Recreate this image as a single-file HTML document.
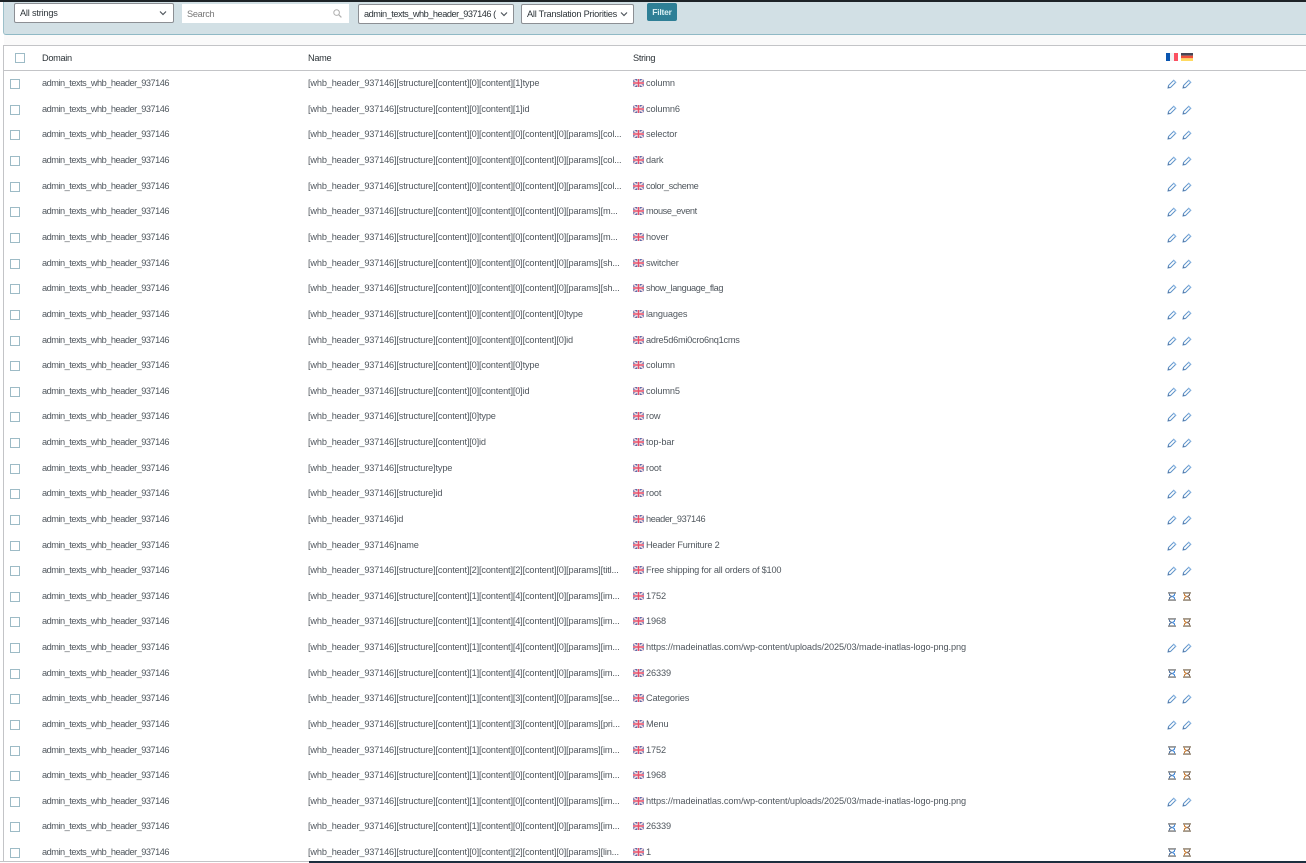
<!DOCTYPE html>
<html><head><meta charset="utf-8"><style>
html,body{margin:0;padding:0;background:#fff}
body{width:1306px;height:863px;position:relative;overflow:hidden;font-family:"Liberation Sans",sans-serif;font-size:9.2px;color:#50575e}
.a{position:absolute;white-space:nowrap}
#top{left:0;top:0;width:1306px;height:2px;background:#1d2327}
#panel{left:3px;top:2px;width:1303px;height:32px;background:#d2e0e5;border-left:1px solid #9dc0ca;border-bottom:1px solid #8fb9c5;border-bottom-left-radius:3px}
#gap{left:4px;top:35px;width:1302px;height:10px;background:#fafafa}
.sel{box-sizing:border-box;background:#fff;border:1px solid #8c8f94;border-radius:2px;color:#2c3338;line-height:18px;padding-left:5px;height:20px}
.chev{position:absolute;right:4px;top:6px}
#tbl{left:3px;top:45px;width:1303px;height:816px;border-left:1px solid #c3c4c7;border-top:1px solid #c3c4c7;box-sizing:border-box}
#hl{left:4px;top:70px;width:1302px;height:1px;background:#c3c4c7}
#bl{left:0;top:861px;width:309px;height:1px;background:#c3c4c7}
#bd{left:309px;top:861px;width:997px;height:2px;background:#1d2f3f}
.cb{position:absolute;box-sizing:border-box;width:10px;height:10px;border:1px solid #9dbbc6;background:#fff}
.t{position:absolute;white-space:nowrap;line-height:12px}
.d{left:42px;letter-spacing:-.48px}
.n{left:308px;letter-spacing:-.16px}
.s{left:646px;letter-spacing:-.12px}
.u{letter-spacing:-.4px}
.h{color:#2c3338;letter-spacing:-.3px}
svg{position:absolute;display:block}
</style></head><body>
<svg width="0" height="0" style="position:absolute"><defs>
<symbol id="uk" viewBox="0 0 11 8"><rect width="11" height="8" fill="#5a6aa8"/><path d="M0 0L11 8M11 0L0 8" stroke="#f0d8de" stroke-width="1.6"/><path d="M5.5 0V8M0 4H11" stroke="#f2e4e8" stroke-width="2.6"/><path d="M5.5 0V8M0 4H11" stroke="#e8506a" stroke-width="1.4"/></symbol>
<symbol id="pen" viewBox="0 0 10 10"><path d="M1 9L1.5 6.5L6.8 1.2L8.8 3.2L3.5 8.5Z" fill="#fff" stroke="#5f93c9" stroke-width="1"/><path d="M6.6 1.4L8.6 3.4" stroke="#9cc4ec" stroke-width="1.3"/><path d="M1 9L1.6 7.2L2.8 8.4Z" fill="#55688a"/></symbol>
<symbol id="hg" viewBox="0 0 8 9"><rect width="8" height="1.8" fill="#9a9a9a"/><rect y="7.2" width="8" height="1.8" fill="#9a9a9a"/><path d="M1.5 1.6V3C1.5 4 3.5 3.8 3.5 4.5C3.5 5.2 1.5 5 1.5 6V7.4" fill="none" stroke="#4f6f9a" stroke-width="1.1"/><path d="M6.5 1.6V3C6.5 4 4.5 3.8 4.5 4.5C4.5 5.2 6.5 5 6.5 6V7.4" fill="none" stroke="#3f86d8" stroke-width="1.1"/></symbol>
<symbol id="hg2" viewBox="0 0 8 9"><rect width="8" height="1.8" fill="#a59a8c"/><rect y="7.2" width="8" height="1.8" fill="#a59a8c"/><path d="M1.5 1.6V3C1.5 4 3.5 3.8 3.5 4.5C3.5 5.2 1.5 5 1.5 6V7.4" fill="none" stroke="#c87a30" stroke-width="1.1"/><path d="M6.5 1.6V3C6.5 4 4.5 3.8 4.5 4.5C4.5 5.2 6.5 5 6.5 6V7.4" fill="none" stroke="#7a6050" stroke-width="1.1"/></symbol>
</defs></svg>
<div class="a" id="top"></div>
<div class="a" id="panel"></div>
<div class="a" id="gap"></div>
<div class="a sel" style="left:14px;top:3px;width:160px;letter-spacing:-.2px">All strings<svg class="chev" style="right:6px" width="8" height="6" viewBox="0 0 8 6"><path d="M1 1.5L4 4.5L7 1.5" fill="none" stroke="#50575e" stroke-width="1.2"/></svg></div>
<div class="a" style="left:182px;top:4px;width:167px;height:19px;background:#fff;line-height:20px;color:#777;padding-left:5px;box-sizing:border-box;letter-spacing:-.3px">Search<svg style="right:7px;top:5px" width="9" height="9" viewBox="0 0 9 9"><circle cx="3.6" cy="3.6" r="2.8" fill="none" stroke="#b0b0b0"/><path d="M5.7 5.7L8.4 8.4" stroke="#b0b0b0" stroke-width="1.2"/></svg></div>
<div class="a sel" style="left:358px;top:4px;width:156px;overflow:hidden;letter-spacing:-.48px">admin_texts_whb_header_937146 (<span style="position:absolute;right:0;top:0;width:16px;height:18px;background:#fff"></span><svg class="chev" style="right:5px" width="8" height="6" viewBox="0 0 8 6"><path d="M1 1.5L4 4.5L7 1.5" fill="none" stroke="#50575e" stroke-width="1.2"/></svg></div>
<div class="a sel" style="left:521px;top:4px;width:113px;letter-spacing:-.23px">All Translation Priorities<svg class="chev" style="right:5px" width="8" height="6" viewBox="0 0 8 6"><path d="M1 1.5L4 4.5L7 1.5" fill="none" stroke="#50575e" stroke-width="1.2"/></svg></div>
<div class="a" style="left:647px;top:3px;width:30px;height:18px;background:#2e7f96;border-radius:2px;color:#d8eef2;text-align:center;line-height:18px;font-size:8.5px;font-weight:bold;letter-spacing:-.2px">Filter</div>
<div class="a" id="tbl"></div><div class="a" id="hl"></div><div class="a" id="bl"></div><div class="a" id="bd"></div>
<div class="cb" style="left:15px;top:53px"></div>
<div class="t h" style="left:42px;top:52px">Domain</div><div class="t h" style="left:308px;top:52px">Name</div><div class="t h" style="left:633px;top:52px">String</div>
<svg style="left:1166px;top:53px" width="12" height="8" viewBox="0 0 12 8"><rect width="4" height="8" fill="#0a55b0"/><rect x="4" width="4" height="8" fill="#f2f2f2"/><rect x="8" width="4" height="8" fill="#fb5060"/></svg>
<svg style="left:1181px;top:53px" width="12" height="8" viewBox="0 0 12 8"><rect width="12" height="2.7" fill="#464655"/><rect y="2.7" width="12" height="2.6" fill="#f0503a"/><rect y="5.3" width="12" height="2.7" fill="#ffda60"/></svg>

<div class="cb" style="left:10px;top:79px"></div><div class="t d" style="top:77px">admin_texts_whb_header_937146</div><div class="t n" style="top:77px">[whb_header_937146][structure][content][0][content][1]type</div><svg style="left:633px;top:79px" width="11" height="8"><use href="#uk"/></svg><div class="t s" style="top:77px">column</div><svg style="left:1167px;top:79px" width="10" height="10"><use href="#pen"/></svg><svg style="left:1182px;top:79px" width="10" height="10"><use href="#pen"/></svg>
<div class="cb" style="left:10px;top:105px"></div><div class="t d" style="top:103px">admin_texts_whb_header_937146</div><div class="t n" style="top:103px">[whb_header_937146][structure][content][0][content][1]id</div><svg style="left:633px;top:105px" width="11" height="8"><use href="#uk"/></svg><div class="t s" style="top:103px">column6</div><svg style="left:1167px;top:105px" width="10" height="10"><use href="#pen"/></svg><svg style="left:1182px;top:105px" width="10" height="10"><use href="#pen"/></svg>
<div class="cb" style="left:10px;top:130px"></div><div class="t d" style="top:128px">admin_texts_whb_header_937146</div><div class="t n" style="top:128px">[whb_header_937146][structure][content][0][content][0][content][0][params][col...</div><svg style="left:633px;top:130px" width="11" height="8"><use href="#uk"/></svg><div class="t s" style="top:128px">selector</div><svg style="left:1167px;top:130px" width="10" height="10"><use href="#pen"/></svg><svg style="left:1182px;top:130px" width="10" height="10"><use href="#pen"/></svg>
<div class="cb" style="left:10px;top:156px"></div><div class="t d" style="top:154px">admin_texts_whb_header_937146</div><div class="t n" style="top:154px">[whb_header_937146][structure][content][0][content][0][content][0][params][col...</div><svg style="left:633px;top:156px" width="11" height="8"><use href="#uk"/></svg><div class="t s" style="top:154px">dark</div><svg style="left:1167px;top:156px" width="10" height="10"><use href="#pen"/></svg><svg style="left:1182px;top:156px" width="10" height="10"><use href="#pen"/></svg>
<div class="cb" style="left:10px;top:182px"></div><div class="t d" style="top:180px">admin_texts_whb_header_937146</div><div class="t n" style="top:180px">[whb_header_937146][structure][content][0][content][0][content][0][params][col...</div><svg style="left:633px;top:182px" width="11" height="8"><use href="#uk"/></svg><div class="t s u" style="top:180px">color_scheme</div><svg style="left:1167px;top:182px" width="10" height="10"><use href="#pen"/></svg><svg style="left:1182px;top:182px" width="10" height="10"><use href="#pen"/></svg>
<div class="cb" style="left:10px;top:207px"></div><div class="t d" style="top:205px">admin_texts_whb_header_937146</div><div class="t n" style="top:205px">[whb_header_937146][structure][content][0][content][0][content][0][params][m...</div><svg style="left:633px;top:207px" width="11" height="8"><use href="#uk"/></svg><div class="t s u" style="top:205px">mouse_event</div><svg style="left:1167px;top:207px" width="10" height="10"><use href="#pen"/></svg><svg style="left:1182px;top:207px" width="10" height="10"><use href="#pen"/></svg>
<div class="cb" style="left:10px;top:233px"></div><div class="t d" style="top:231px">admin_texts_whb_header_937146</div><div class="t n" style="top:231px">[whb_header_937146][structure][content][0][content][0][content][0][params][m...</div><svg style="left:633px;top:233px" width="11" height="8"><use href="#uk"/></svg><div class="t s" style="top:231px">hover</div><svg style="left:1167px;top:233px" width="10" height="10"><use href="#pen"/></svg><svg style="left:1182px;top:233px" width="10" height="10"><use href="#pen"/></svg>
<div class="cb" style="left:10px;top:259px"></div><div class="t d" style="top:257px">admin_texts_whb_header_937146</div><div class="t n" style="top:257px">[whb_header_937146][structure][content][0][content][0][content][0][params][sh...</div><svg style="left:633px;top:259px" width="11" height="8"><use href="#uk"/></svg><div class="t s" style="top:257px">switcher</div><svg style="left:1167px;top:259px" width="10" height="10"><use href="#pen"/></svg><svg style="left:1182px;top:259px" width="10" height="10"><use href="#pen"/></svg>
<div class="cb" style="left:10px;top:284px"></div><div class="t d" style="top:282px">admin_texts_whb_header_937146</div><div class="t n" style="top:282px">[whb_header_937146][structure][content][0][content][0][content][0][params][sh...</div><svg style="left:633px;top:284px" width="11" height="8"><use href="#uk"/></svg><div class="t s u" style="top:282px">show_language_flag</div><svg style="left:1167px;top:284px" width="10" height="10"><use href="#pen"/></svg><svg style="left:1182px;top:284px" width="10" height="10"><use href="#pen"/></svg>
<div class="cb" style="left:10px;top:310px"></div><div class="t d" style="top:308px">admin_texts_whb_header_937146</div><div class="t n" style="top:308px">[whb_header_937146][structure][content][0][content][0][content][0]type</div><svg style="left:633px;top:310px" width="11" height="8"><use href="#uk"/></svg><div class="t s" style="top:308px">languages</div><svg style="left:1167px;top:310px" width="10" height="10"><use href="#pen"/></svg><svg style="left:1182px;top:310px" width="10" height="10"><use href="#pen"/></svg>
<div class="cb" style="left:10px;top:336px"></div><div class="t d" style="top:334px">admin_texts_whb_header_937146</div><div class="t n" style="top:334px">[whb_header_937146][structure][content][0][content][0][content][0]id</div><svg style="left:633px;top:336px" width="11" height="8"><use href="#uk"/></svg><div class="t s" style="top:334px;letter-spacing:-.25px">adre5d6mi0cro6nq1cms</div><svg style="left:1167px;top:336px" width="10" height="10"><use href="#pen"/></svg><svg style="left:1182px;top:336px" width="10" height="10"><use href="#pen"/></svg>
<div class="cb" style="left:10px;top:361px"></div><div class="t d" style="top:359px">admin_texts_whb_header_937146</div><div class="t n" style="top:359px">[whb_header_937146][structure][content][0][content][0]type</div><svg style="left:633px;top:361px" width="11" height="8"><use href="#uk"/></svg><div class="t s" style="top:359px">column</div><svg style="left:1167px;top:361px" width="10" height="10"><use href="#pen"/></svg><svg style="left:1182px;top:361px" width="10" height="10"><use href="#pen"/></svg>
<div class="cb" style="left:10px;top:387px"></div><div class="t d" style="top:385px">admin_texts_whb_header_937146</div><div class="t n" style="top:385px">[whb_header_937146][structure][content][0][content][0]id</div><svg style="left:633px;top:387px" width="11" height="8"><use href="#uk"/></svg><div class="t s" style="top:385px">column5</div><svg style="left:1167px;top:387px" width="10" height="10"><use href="#pen"/></svg><svg style="left:1182px;top:387px" width="10" height="10"><use href="#pen"/></svg>
<div class="cb" style="left:10px;top:412px"></div><div class="t d" style="top:410px">admin_texts_whb_header_937146</div><div class="t n" style="top:410px">[whb_header_937146][structure][content][0]type</div><svg style="left:633px;top:412px" width="11" height="8"><use href="#uk"/></svg><div class="t s" style="top:410px">row</div><svg style="left:1167px;top:412px" width="10" height="10"><use href="#pen"/></svg><svg style="left:1182px;top:412px" width="10" height="10"><use href="#pen"/></svg>
<div class="cb" style="left:10px;top:438px"></div><div class="t d" style="top:436px">admin_texts_whb_header_937146</div><div class="t n" style="top:436px">[whb_header_937146][structure][content][0]id</div><svg style="left:633px;top:438px" width="11" height="8"><use href="#uk"/></svg><div class="t s" style="top:436px">top-bar</div><svg style="left:1167px;top:438px" width="10" height="10"><use href="#pen"/></svg><svg style="left:1182px;top:438px" width="10" height="10"><use href="#pen"/></svg>
<div class="cb" style="left:10px;top:464px"></div><div class="t d" style="top:462px">admin_texts_whb_header_937146</div><div class="t n" style="top:462px">[whb_header_937146][structure]type</div><svg style="left:633px;top:464px" width="11" height="8"><use href="#uk"/></svg><div class="t s" style="top:462px">root</div><svg style="left:1167px;top:464px" width="10" height="10"><use href="#pen"/></svg><svg style="left:1182px;top:464px" width="10" height="10"><use href="#pen"/></svg>
<div class="cb" style="left:10px;top:489px"></div><div class="t d" style="top:487px">admin_texts_whb_header_937146</div><div class="t n" style="top:487px">[whb_header_937146][structure]id</div><svg style="left:633px;top:489px" width="11" height="8"><use href="#uk"/></svg><div class="t s" style="top:487px">root</div><svg style="left:1167px;top:489px" width="10" height="10"><use href="#pen"/></svg><svg style="left:1182px;top:489px" width="10" height="10"><use href="#pen"/></svg>
<div class="cb" style="left:10px;top:515px"></div><div class="t d" style="top:513px">admin_texts_whb_header_937146</div><div class="t n" style="top:513px">[whb_header_937146]id</div><svg style="left:633px;top:515px" width="11" height="8"><use href="#uk"/></svg><div class="t s u" style="top:513px">header_937146</div><svg style="left:1167px;top:515px" width="10" height="10"><use href="#pen"/></svg><svg style="left:1182px;top:515px" width="10" height="10"><use href="#pen"/></svg>
<div class="cb" style="left:10px;top:541px"></div><div class="t d" style="top:539px">admin_texts_whb_header_937146</div><div class="t n" style="top:539px">[whb_header_937146]name</div><svg style="left:633px;top:541px" width="11" height="8"><use href="#uk"/></svg><div class="t s" style="top:539px;letter-spacing:-.2px">Header Furniture 2</div><svg style="left:1167px;top:541px" width="10" height="10"><use href="#pen"/></svg><svg style="left:1182px;top:541px" width="10" height="10"><use href="#pen"/></svg>
<div class="cb" style="left:10px;top:566px"></div><div class="t d" style="top:564px">admin_texts_whb_header_937146</div><div class="t n" style="top:564px">[whb_header_937146][structure][content][2][content][2][content][0][params][titl...</div><svg style="left:633px;top:566px" width="11" height="8"><use href="#uk"/></svg><div class="t s" style="top:564px;letter-spacing:-.2px">Free shipping for all orders of $100</div><svg style="left:1167px;top:566px" width="10" height="10"><use href="#pen"/></svg><svg style="left:1182px;top:566px" width="10" height="10"><use href="#pen"/></svg>
<div class="cb" style="left:10px;top:592px"></div><div class="t d" style="top:590px">admin_texts_whb_header_937146</div><div class="t n" style="top:590px">[whb_header_937146][structure][content][1][content][4][content][0][params][im...</div><svg style="left:633px;top:592px" width="11" height="8"><use href="#uk"/></svg><div class="t s" style="top:590px">1752</div><svg style="left:1168px;top:592px" width="8" height="9"><use href="#hg"/></svg><svg style="left:1183px;top:592px" width="8" height="9"><use href="#hg2"/></svg>
<div class="cb" style="left:10px;top:617px"></div><div class="t d" style="top:615px">admin_texts_whb_header_937146</div><div class="t n" style="top:615px">[whb_header_937146][structure][content][1][content][4][content][0][params][im...</div><svg style="left:633px;top:617px" width="11" height="8"><use href="#uk"/></svg><div class="t s" style="top:615px">1968</div><svg style="left:1168px;top:618px" width="8" height="9"><use href="#hg"/></svg><svg style="left:1183px;top:618px" width="8" height="9"><use href="#hg2"/></svg>
<div class="cb" style="left:10px;top:643px"></div><div class="t d" style="top:641px">admin_texts_whb_header_937146</div><div class="t n" style="top:641px">[whb_header_937146][structure][content][1][content][4][content][0][params][im...</div><svg style="left:633px;top:643px" width="11" height="8"><use href="#uk"/></svg><div class="t s" style="top:641px;letter-spacing:-.09px">https://madeinatlas.com/wp-content/uploads/2025/03/made-inatlas-logo-png.png</div><svg style="left:1167px;top:643px" width="10" height="10"><use href="#pen"/></svg><svg style="left:1182px;top:643px" width="10" height="10"><use href="#pen"/></svg>
<div class="cb" style="left:10px;top:669px"></div><div class="t d" style="top:667px">admin_texts_whb_header_937146</div><div class="t n" style="top:667px">[whb_header_937146][structure][content][1][content][4][content][0][params][im...</div><svg style="left:633px;top:669px" width="11" height="8"><use href="#uk"/></svg><div class="t s" style="top:667px">26339</div><svg style="left:1168px;top:669px" width="8" height="9"><use href="#hg"/></svg><svg style="left:1183px;top:669px" width="8" height="9"><use href="#hg2"/></svg>
<div class="cb" style="left:10px;top:694px"></div><div class="t d" style="top:692px">admin_texts_whb_header_937146</div><div class="t n" style="top:692px">[whb_header_937146][structure][content][1][content][3][content][0][params][se...</div><svg style="left:633px;top:694px" width="11" height="8"><use href="#uk"/></svg><div class="t s" style="top:692px">Categories</div><svg style="left:1167px;top:694px" width="10" height="10"><use href="#pen"/></svg><svg style="left:1182px;top:694px" width="10" height="10"><use href="#pen"/></svg>
<div class="cb" style="left:10px;top:720px"></div><div class="t d" style="top:718px">admin_texts_whb_header_937146</div><div class="t n" style="top:718px">[whb_header_937146][structure][content][1][content][3][content][0][params][pri...</div><svg style="left:633px;top:720px" width="11" height="8"><use href="#uk"/></svg><div class="t s" style="top:718px">Menu</div><svg style="left:1167px;top:720px" width="10" height="10"><use href="#pen"/></svg><svg style="left:1182px;top:720px" width="10" height="10"><use href="#pen"/></svg>
<div class="cb" style="left:10px;top:746px"></div><div class="t d" style="top:744px">admin_texts_whb_header_937146</div><div class="t n" style="top:744px">[whb_header_937146][structure][content][1][content][0][content][0][params][im...</div><svg style="left:633px;top:746px" width="11" height="8"><use href="#uk"/></svg><div class="t s" style="top:744px">1752</div><svg style="left:1168px;top:746px" width="8" height="9"><use href="#hg"/></svg><svg style="left:1183px;top:746px" width="8" height="9"><use href="#hg2"/></svg>
<div class="cb" style="left:10px;top:771px"></div><div class="t d" style="top:769px">admin_texts_whb_header_937146</div><div class="t n" style="top:769px">[whb_header_937146][structure][content][1][content][0][content][0][params][im...</div><svg style="left:633px;top:771px" width="11" height="8"><use href="#uk"/></svg><div class="t s" style="top:769px">1968</div><svg style="left:1168px;top:771px" width="8" height="9"><use href="#hg"/></svg><svg style="left:1183px;top:771px" width="8" height="9"><use href="#hg2"/></svg>
<div class="cb" style="left:10px;top:797px"></div><div class="t d" style="top:795px">admin_texts_whb_header_937146</div><div class="t n" style="top:795px">[whb_header_937146][structure][content][1][content][0][content][0][params][im...</div><svg style="left:633px;top:797px" width="11" height="8"><use href="#uk"/></svg><div class="t s" style="top:795px;letter-spacing:-.09px">https://madeinatlas.com/wp-content/uploads/2025/03/made-inatlas-logo-png.png</div><svg style="left:1167px;top:797px" width="10" height="10"><use href="#pen"/></svg><svg style="left:1182px;top:797px" width="10" height="10"><use href="#pen"/></svg>
<div class="cb" style="left:10px;top:822px"></div><div class="t d" style="top:820px">admin_texts_whb_header_937146</div><div class="t n" style="top:820px">[whb_header_937146][structure][content][1][content][0][content][0][params][im...</div><svg style="left:633px;top:822px" width="11" height="8"><use href="#uk"/></svg><div class="t s" style="top:820px">26339</div><svg style="left:1168px;top:823px" width="8" height="9"><use href="#hg"/></svg><svg style="left:1183px;top:823px" width="8" height="9"><use href="#hg2"/></svg>
<div class="cb" style="left:10px;top:848px"></div><div class="t d" style="top:846px">admin_texts_whb_header_937146</div><div class="t n" style="top:846px">[whb_header_937146][structure][content][0][content][2][content][0][params][lin...</div><svg style="left:633px;top:848px" width="11" height="8"><use href="#uk"/></svg><div class="t s" style="top:846px">1</div><svg style="left:1168px;top:848px" width="8" height="9"><use href="#hg"/></svg><svg style="left:1183px;top:848px" width="8" height="9"><use href="#hg2"/></svg>
</body></html>
